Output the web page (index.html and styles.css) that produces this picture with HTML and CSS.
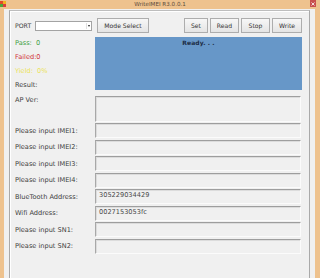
FILE: index.html
```html
<!DOCTYPE html>
<html>
<head>
<meta charset="utf-8">
<link rel="stylesheet" href="styles.css">
</head>
<body>
<div class="frame">
  <div class="titlebar">
    <svg class="app-icon" width="6" height="6" viewBox="0 0 6 6"><rect x="0" y="0" width="3" height="3" fill="#e04a2a"/><rect x="3" y="0" width="3" height="3" fill="#f2b01e"/><rect x="0" y="3" width="3" height="3" fill="#4aa83a"/><rect x="3" y="3" width="3" height="3" fill="#d83c3c"/></svg>
    <span class="title">WriteIMEI R3.0.0.1</span>
    <span class="close"><svg width="4" height="4" viewBox="0 0 4 4"><path d="M0.5 0.5L3.5 3.5M3.5 0.5L0.5 3.5" stroke="#fff" stroke-width="0.8"/></svg></span>
  </div>
  <div class="client">
    <div class="panel">
      <div class="toolbar">
        <span class="lbl port">PORT</span>
        <div class="combo"><span class="combo-arrow"></span></div>
        <button class="btn mode">Mode Select</button>
        <div class="btn-group">
          <button class="btn set">Set</button>
          <button class="btn read">Read</button>
          <button class="btn stop">Stop</button>
          <button class="btn write">Write</button>
        </div>
      </div>
      <div class="row status-row">
        <div class="stats">
          <div class="pass">Pass:&nbsp; 0</div>
          <div class="fail">Failed:0</div>
          <div class="yield">Yield:&nbsp; 0%</div>
          <div class="lbl">Result:</div>
        </div>
        <div class="status"><span>Ready. . .</span></div>
      </div>
      <div class="row ap-row">
        <span class="lbl">AP Ver:</span>
        <div class="field tall"></div>
      </div>
      <div class="row first"><span class="lbl">Please input IMEI1:</span><div class="field"></div></div>
      <div class="row"><span class="lbl">Please input IMEI2:</span><div class="field"></div></div>
      <div class="row"><span class="lbl">Please input IMEI3:</span><div class="field"></div></div>
      <div class="row"><span class="lbl">Please input IMEI4:</span><div class="field"></div></div>
      <div class="row"><span class="lbl">BlueTooth Address:</span><div class="field">305229034429</div></div>
      <div class="row"><span class="lbl">Wifi Address:</span><div class="field">0027153053fc</div></div>
      <div class="row"><span class="lbl">Please input SN1:</span><div class="field"></div></div>
      <div class="row"><span class="lbl">Please input SN2:</span><div class="field"></div></div>
    </div>
  </div>
</div>
</body>
</html>
```
FILE: styles.css
```css
* { box-sizing: border-box; }
html, body {
  margin: 0;
  padding: 0;
  width: 320px;
  height: 278px;
  overflow: hidden;
  background: #eec28e;
  font-family: "DejaVu Sans", Verdana, sans-serif;
  font-size: 6.6px;
  color: #3c3c3c;
}
.frame {
  width: 320px;
  height: 278px;
  display: flex;
  flex-direction: column;
}
.titlebar {
  height: 9px;
  flex: none;
  display: flex;
  align-items: center;
  position: relative;
}
.app-icon { flex: none; margin-top: -2px; }
.title {
  flex: 1;
  text-align: center;
  font-size: 5.6px;
  color: #5a4a3a;
  margin-right: 6px;
  margin-top: -1px;
}
.close {
  position: absolute;
  left: 310px;
  top: 0;
  width: 6px;
  height: 7px;
  background: #c9504e;
  display: flex;
  align-items: center;
  justify-content: center;
}
.client {
  flex: 1;
  margin: 0 5px 0 4px;
  background: #f0f0f0;
  padding: 1px 5px 0 5px;
  display: flex;
  flex-direction: column;
}
.panel {
  flex: 1;
  border-left: 1px solid #a9a9a9;
  border-top: 1px solid #bdbdbd;
  border-right: 1px solid #a9a9a9;
  box-shadow: inset 1px 1px 0 #ffffff;
  padding: 7px 7px 0 5px;
}
.toolbar {
  display: flex;
  align-items: center;
  height: 15px;
}
.lbl { color: #404040; white-space: nowrap; }
.port { width: 20px; font-size: 6.2px; }
.combo {
  width: 57px;
  height: 10px;
  background: #ffffff;
  border: 1px solid #a3a3a3;
  position: relative;
  margin-top: 1px;
}
.combo-arrow {
  position: absolute;
  right: 1px;
  top: 1px;
  width: 4px;
  height: 6px;
  border-left: 1px solid #e0e0e0;
}
.combo-arrow::after {
  content: "";
  position: absolute;
  left: 1px;
  top: 2px;
  border-left: 1.5px solid transparent;
  border-right: 1.5px solid transparent;
  border-top: 2px solid #222;
}
.btn {
  font-family: "DejaVu Sans", Verdana, sans-serif;
  font-size: 6.1px;
  color: #333;
  height: 15px;
  padding: 0;
  margin: 0;
  border: 1px solid #adadad;
  border-radius: 0;
  background: linear-gradient(#f7f7f7, #e4e4e4);
}
.mode { width: 52px; margin-left: 5px; }
.btn-group {
  margin-left: auto;
  display: flex;
  gap: 2px;
}
.set { width: 24px; }
.read { width: 29px; }
.stop { width: 29px; }
.write { width: 30px; }
.row {
  display: grid;
  grid-template-columns: 80px 1fr;
  align-items: center;
  height: 15px;
  margin-top: 1.5px;
}
.status-row {
  height: 53px;
  margin-top: 4px;
  align-items: start;
}
.stats {
  margin-top: -1px;
  line-height: 14px;
}
.pass { color: #43a047; }
.fail { color: #d0343c; }
.yield { color: #ece35a; }
.status {
  height: 53px;
  background: #6797c8;
  text-align: center;
}
.status span {
  display: inline-block;
  margin-top: 2px;
  font-weight: bold;
  color: #1c2c44;
  font-size: 6px;
  letter-spacing: 0.1px;
}
.ap-row {
  height: 26px;
  margin-top: 6px;
  align-items: start;
}
.ap-row .lbl { line-height: 8px; }
.row.first { margin-top: 1px; }
.field {
  height: 15px;
  border-top: 1px solid #9e9e9e;
  border-left: 1px solid #a8a8a8;
  border-right: 1px solid #fbfbfb;
  border-bottom: 1px solid #fbfbfb;
  box-shadow: inset 1px 1px 0 #dcdcdc;
  background: #f0f0f0;
  margin-right: 1px;
  padding: 1px 0 0 3px;
  line-height: 8px;
  color: #4a4a4a;
}
.field.tall { height: 26px; }
```
